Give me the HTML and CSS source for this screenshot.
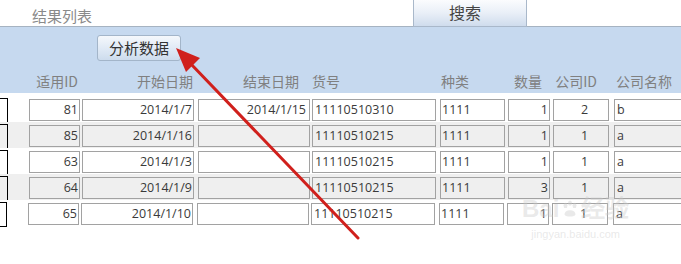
FILE: index.html
```html
<!DOCTYPE html>
<html lang="zh-CN">
<head>
    <meta charset="UTF-8">
    <title>结果列表</title>
    <link rel="stylesheet" href="styles.css">
</head>
<body>
    <div class="topbar">
        <span class="title">结果列表</span>
        <button class="search-btn">搜索</button>
    </div>

    <div class="panel">
        <button class="analyze-btn">分析数据</button>
        <div class="row head">
            <div class="sel blank"></div>
            <div class="cell c-id r">适用ID</div>
            <div class="cell c-start r">开始日期</div>
            <div class="cell c-end r">结束日期</div>
            <div class="cell c-no">货号</div>
            <div class="cell c-kind">种类</div>
            <div class="cell c-qty r">数量</div>
            <div class="cell c-cid r">公司ID</div>
            <div class="cell c-name">公司名称</div>
        </div>
    </div>

    <div class="list">
        <div class="row">
            <div class="sel"></div>
            <div class="box c-id num">81</div>
            <div class="box c-start num">2014/1/7</div>
            <div class="box c-end num">2014/1/15</div>
            <div class="box c-no">11110510310</div>
            <div class="box c-kind">1111</div>
            <div class="box c-qty num">1</div>
            <div class="box c-cid mid">2</div>
            <div class="box c-name">b</div>
        </div>
        <div class="row alt">
            <div class="sel"></div>
            <div class="box c-id num">85</div>
            <div class="box c-start num">2014/1/16</div>
            <div class="box c-end num"></div>
            <div class="box c-no">11110510215</div>
            <div class="box c-kind">1111</div>
            <div class="box c-qty num">1</div>
            <div class="box c-cid mid">1</div>
            <div class="box c-name">a</div>
        </div>
        <div class="row">
            <div class="sel"></div>
            <div class="box c-id num">63</div>
            <div class="box c-start num">2014/1/3</div>
            <div class="box c-end num"></div>
            <div class="box c-no">11110510215</div>
            <div class="box c-kind">1111</div>
            <div class="box c-qty num">1</div>
            <div class="box c-cid mid">1</div>
            <div class="box c-name">a</div>
        </div>
        <div class="row alt">
            <div class="sel"></div>
            <div class="box c-id num">64</div>
            <div class="box c-start num">2014/1/9</div>
            <div class="box c-end num"></div>
            <div class="box c-no">11110510215</div>
            <div class="box c-kind">1111</div>
            <div class="box c-qty num">3</div>
            <div class="box c-cid mid">1</div>
            <div class="box c-name">a</div>
        </div>
        <div class="row last">
            <div class="sel"></div>
            <div class="box c-id num">65</div>
            <div class="box c-start num">2014/1/10</div>
            <div class="box c-end num"></div>
            <div class="box c-no">11110510215</div>
            <div class="box c-kind">1111</div>
            <div class="box c-qty num">1</div>
            <div class="box c-cid mid">1</div>
            <div class="box c-name">a</div>
        </div>
    </div>

    <!-- watermark -->
    <div class="watermark">
        <div class="wm-logo">Bai<svg class="paw" width="18" height="18" viewBox="0 0 20 20"><ellipse cx="5" cy="6" rx="2.2" ry="3" /><ellipse cx="10" cy="3.5" rx="2.2" ry="3" /><ellipse cx="15" cy="6" rx="2.2" ry="3" /><path d="M4 16 C4 10 16 10 16 16 C16 19 4 19 4 16 Z" /></svg>经验</div>
        <div class="wm-url">jingyan.baidu.com</div>
    </div>

    <!-- annotation arrow -->
    <svg class="arrow" width="681" height="264" viewBox="0 0 681 264">
        <line x1="358" y1="238" x2="190" y2="63" stroke="#d0201c" stroke-width="3" stroke-linecap="round" />
        <polygon points="176,48 200,58 186,72" fill="#d0201c" />
    </svg>
</body>
</html>
```

FILE: styles.css
```css
body {
    margin: 0;
    width: 681px;
    height: 264px;
    overflow: hidden;
    position: relative;
    background: #fff;
    font-family: "Noto Sans CJK SC", sans-serif;
    color: #333;
}
.topbar {
    height: 26px;
    border-bottom: 1px solid #a6b3c1;
    display: flex;
    align-items: flex-end;
}
.title {
    margin-left: 32px;
    margin-bottom: 0;
    font-size: 15px;
    line-height: 20px;
    color: #8a8a8a;
}
.search-btn {
    margin-left: 321px;
    width: 114px;
    height: 27px;
    margin-bottom: -1px;
    border: 1px solid #a9b8ca;
    border-top: none;
    background: linear-gradient(#fbfcfe, #e9eff7 50%, #cfdced);
    font-family: "Noto Sans CJK SC", sans-serif;
    font-size: 16px;
    font-weight: normal;
    color: #444;
    padding: 0 10px 3px 0;
}
.panel {
    background: #c6d9ef;
    height: 66px;
    padding-top: 8px;
    box-sizing: border-box;
}
.analyze-btn {
    display: block;
    margin-left: 97px;
    width: 84px;
    height: 26px;
    border: 1px solid #a3b5c9;
    border-radius: 3px;
    background: linear-gradient(#f5f8fc, #dfe9f5 55%, #cddced);
    font-family: "Noto Sans CJK SC", sans-serif;
    font-size: 15px;
    color: #333;
    padding: 0 0 1px 0;
}
.row {
    display: flex;
    height: 26px;
}
.head {
    margin-top: 10px;
    height: 20px;
    font-size: 14px;
    line-height: 20px;
    color: #808080;
}
.cell {
    display: flex;
    white-space: nowrap;
}
.cell.r {
    justify-content: flex-end;
}
.head .c-id { padding-right: 1px; }
.head .c-start { padding-right: 0; }
.head .c-end { padding-right: 10px; }
.head .c-no { padding-left: 1px; }
.head .c-kind { padding-left: 2px; }
.head .c-qty { padding-right: 7px; }
.head .c-cid { padding-right: 11px; }
.head .c-name { padding-left: 3px; }

.list {
    margin-top: 3px;
    font-family: "Open Sans", sans-serif;
    font-size: 12.5px;
    color: #3a3a3a;
}
.alt {
    background: #efefef;
}
.sel {
    width: 7px;
    flex: none;
    margin-top: 2px;
    border-top: 1px solid #000;
    border-right: 1px solid #000;
}
.sel.blank {
    border: none;
    margin-top: 0;
}
.last .sel {
    box-sizing: border-box;
    height: 25px;
    border-bottom: 1px solid #000;
}
.box, .cell {
    box-sizing: border-box;
    flex: none;
}
.box {
    margin-top: 3px;
    height: 22px;
    line-height: 20px;
    border: 1px solid #a2a2a2;
    padding: 0 2px;
    white-space: nowrap;
    overflow: hidden;
}
.num {
    text-align: right;
    padding-right: 1px;
}
.mid {
    text-align: center;
    padding-left: 9px;
}
.c-id { width: 51px; margin-left: 21px; }
.c-start { width: 112px; margin-left: 2px; }
.c-end { width: 112px; margin-left: 4px; }
.c-end.box { padding-right: 3px; }
.c-no { width: 124px; margin-left: 2px; }
.c-kind { width: 65px; margin-left: 4px; }
.c-kind.box { padding-left: 1px; }
.c-qty { width: 42px; margin-left: 3px; }
.c-cid { width: 56px; margin-left: 3px; }
.c-name { width: 80px; margin-left: 5px; }
.c-name.box { padding-left: 2px; }

.watermark {
    position: absolute;
    left: 522px;
    top: 196px;
    color: rgba(200, 200, 200, 0.4);
    font-family: "Liberation Sans", sans-serif;
    text-align: center;
    pointer-events: none;
}
.wm-logo {
    font-size: 24px;
    line-height: 26px;
    font-weight: bold;
    display: flex;
    align-items: center;
}
.wm-logo .paw {
    fill: rgba(200, 200, 200, 0.4);
    margin: 0 2px;
}
.wm-url {
    font-size: 11px;
    margin-top: 6px;
}
.arrow {
    position: absolute;
    left: 0;
    top: 0;
    pointer-events: none;
}
```
